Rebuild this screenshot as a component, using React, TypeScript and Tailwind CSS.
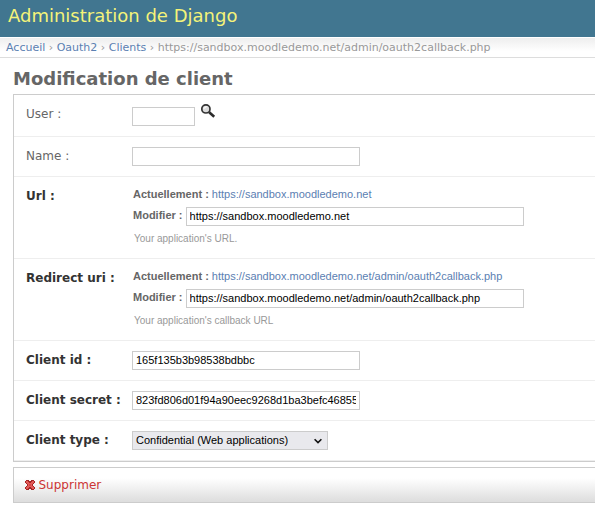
import type { ReactNode } from "react";

const sans = "font-['DejaVu_Sans',sans-serif]";
const arial = "font-['Liberation_Sans',sans-serif]";
const box =
  "block h-[19px] shrink-0 rounded-none border border-[#ccc] bg-white px-[3px] pt-0 pb-[2px] text-[11px] leading-[15px] text-black outline-none font-['Liberation_Sans',sans-serif]";

function Row({ label, required, height = "h-10", children }: { label: string; required?: boolean; height?: string; children: ReactNode }) {
  return (
    <div className={`flex items-start border-b border-[#eee] pl-3 ${height}`}>
      <label
        className={`w-[106px] shrink-0 whitespace-nowrap pt-[11px] text-[12px] leading-[16px] ${
          required ? "font-bold text-[#333]" : "text-[#666]"
        }`}
      >
        {label}
      </label>
      {children}
    </div>
  );
}

function UrlField({ value, help }: { value: string; help: string }) {
  return (
    <div className={`flex flex-col pt-[11px] text-[11px] text-[#666] ${arial}`}>
      <p className="pl-px leading-[13px]">
        <b>Actuellement :</b>{" "}
        <a className="text-[#5b80b2]">{value}</a>
      </p>
      <div className="mt-[6px] flex items-start pl-px">
        <b className="w-[52.6px] shrink-0 leading-[17px]">Modifier :</b>
        <input className={`${box} w-[338px]`} defaultValue={value} />
      </div>
      <p className="mt-[6px] pl-[2px] text-[10px] leading-[13px] text-[#999]">{help}</p>
    </div>
  );
}

function SearchIcon() {
  return (
    <svg className="mt-[8px] ml-[5px] h-4 w-4" viewBox="0 0 16 16" fill="none">
      <circle cx="5.9" cy="5.9" r="4.1" fill="#dcdcdc" stroke="#333" strokeWidth="1.7" />
      <path d="M3.2 6.2 Q3.6 3.2 7.6 3 Q6 5.8 3.2 6.2Z" fill="#f7f7f7" />
      <path d="M9.2 9.2 L14.2 13.8" stroke="#2b2b2b" strokeWidth="2.6" />
    </svg>
  );
}

function DeleteIcon() {
  return (
    <svg className="h-[10px] w-[10px]" viewBox="0 0 10 10" shapeRendering="crispEdges">
      <path
        d="M1 0H4V1H6V0H9V1H10V3H9V4H8V6H9V7H10V9H9V10H6V9H4V10H1V9H0V7H1V6H2V4H1V3H0V1H1Z"
        fill="#a62424"
      />
      <path d="M1 1H3V2H4V3H6V2H7V1H9V3H8V4H7V6H8V7H9V9H7V8H6V7H4V8H3V9H1V7H2V6H3V4H2V3H1Z" fill="#e25b58" />
      <path d="M4 4H6V6H4Z" fill="#d84444" />
    </svg>
  );
}

export default function App() {
  return (
    <div className={`h-[519px] w-full overflow-hidden bg-white ${sans}`}>
      <header className="h-[37px] bg-[#417690] pl-2">
        <h1 className="pt-[5px] text-[18px] leading-[22px] text-[#f4f379]">Administration de Django</h1>
      </header>
      <nav className="mt-px h-[20px] whitespace-nowrap border-b border-[#ddd] bg-linear-to-b from-[#eee] to-white to-70% pl-[6px] text-[11px] leading-[19px] text-[#999]">
        <a className="text-[#5b80b2]">Accueil</a> › <a className="text-[#5b80b2]">Oauth2</a> ›{" "}
        <a className="text-[#5b80b2]">Clients</a> › https://sandbox.moodledemo.net/admin/oauth2callback.php
      </nav>
      <main className="pl-[13px]">
        <h2 className="h-9 pt-[10px] text-[18px] leading-[22px] font-bold text-[#666]">Modification de client</h2>
        <form>
          <fieldset className="border-y border-l border-[#ccc]">
            <Row label="User :" height="h-[42px]">
              <input className={`${box} mt-3 w-[63px]`} />
              <SearchIcon />
            </Row>
            <Row label="Name :">
              <input className={`${box} mt-[10px] w-[228px]`} />
            </Row>
            <Row label="Url :" required height="h-[82px]">
              <UrlField value="https://sandbox.moodledemo.net" help="Your application's URL." />
            </Row>
            <Row label="Redirect uri :" required height="h-[82px]">
              <UrlField
                value="https://sandbox.moodledemo.net/admin/oauth2callback.php"
                help="Your application's callback URL"
              />
            </Row>
            <Row label="Client id :" required>
              <input className={`${box} mt-[10px] w-[228px]`} defaultValue="165f135b3b98538bdbbc" />
            </Row>
            <Row label="Client secret :" required>
              <input className={`${box} mt-[10px] w-[228px]`} defaultValue="823fd806d01f94a90eec9268d1ba3befc468552" />
            </Row>
            <Row label="Client type :" required>
              <button
                type="button"
                className={`mt-[10px] flex h-[19px] w-[196px] items-center justify-between border border-[#ccc] bg-[#e9e9ed] pr-[5px] pl-[3px] text-[11px] leading-[17px] text-black ${arial}`}
              >
                Confidential (Web applications)
                <svg className="h-2 w-2" viewBox="0 0 8 8" fill="none">
                  <path d="M0.6 2.2 L4 5.6 L7.4 2.2" stroke="#111" strokeWidth="1.6" />
                </svg>
              </button>
            </Row>
          </fieldset>
          <div className="mt-[5px] flex h-9 items-center border-y border-l border-[#ccc] bg-linear-to-b from-white from-30% to-[#ddd] pl-[11px]">
            <DeleteIcon />
            <a className="ml-[3.5px] text-[12px] leading-[16px] text-[#cc3434]">Supprimer</a>
          </div>
        </form>
      </main>
    </div>
  );
}
